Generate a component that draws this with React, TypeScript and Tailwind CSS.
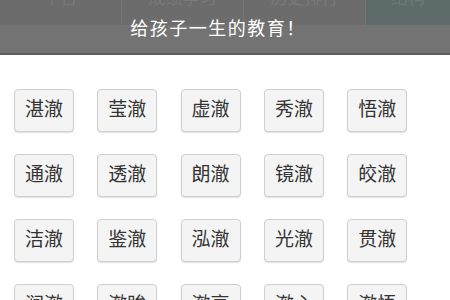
const tabs = ["平台", "成绩学习", "历史排行"];

const words = [
  "湛澈", "莹澈", "虚澈", "秀澈", "悟澈",
  "通澈", "透澈", "朗澈", "镜澈", "皎澈",
  "洁澈", "鉴澈", "泓澈", "光澈", "贯澈",
  "涧澈", "澈眸", "澈亮", "澈心", "澈悟",
];

export default function App() {
  return (
    <div
      className="w-[450px] h-[300px] overflow-hidden bg-white"
      style={{ fontFamily: '"Liberation Sans", "Noto Sans CJK SC", sans-serif' }}
    >
      {/* dimmed top bar */}
      <div className="h-[53px] bg-[#737373] flex flex-col">
        <div className="h-[25px] flex bg-[#6c6c6c] overflow-hidden">
          {tabs.map((t) => (
            <div
              key={t}
              className="w-[122px] border-r border-[#767676] flex justify-center"
            >
              <span className="text-[17px] leading-none -mt-[10px] text-[#797979]">{t}</span>
            </div>
          ))}
          <div className="flex-1 bg-[#5d6b6b] flex justify-center">
            <span className="text-[17px] leading-none -mt-[10px] text-[#6b7a7a]">结构</span>
          </div>
        </div>
        <div className="flex-1 flex justify-center items-start pr-[14px]">
          <span className="text-[18px] leading-none -mt-[5px] text-white tracking-[1.5px]">
            给孩子一生的教育！
          </span>
        </div>
      </div>
      <div className="h-[2px] bg-[#5e5e5e]" />

      {/* word buttons */}
      <div className="pl-[14px] pt-[34px] grid grid-cols-[repeat(5,60px)] gap-x-[23.3px] gap-y-[22px]">
        {words.map((w) => (
          <div
            key={w}
            className="h-[43px] rounded-[4px] border border-[#cfcfcf] bg-[#f4f4f4] shadow-[0_1px_1px_rgba(0,0,0,0.12)] flex items-center justify-center text-[19px] text-[#333]"
          >
            {w}
          </div>
        ))}
      </div>
    </div>
  );
}
